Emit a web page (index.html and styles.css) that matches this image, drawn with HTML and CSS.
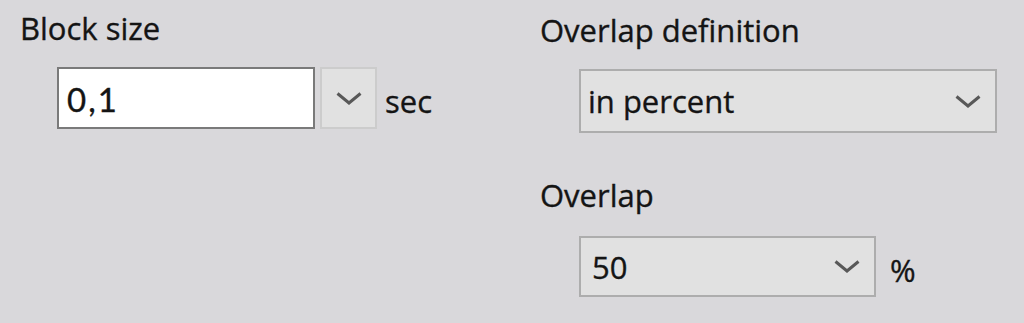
FILE: index.html
```html
<!DOCTYPE html>
<html>
<head>
<meta charset="utf-8">
<link rel="stylesheet" href="styles.css">
</head>
<body>
<div class="dialog">
  <div class="col col-left">
    <div class="label">Block size</div>
    <div class="row">
      <div class="edit"><span class="mono">0,1</span></div>
      <div class="drop-btn">
        <svg class="chev" viewBox="0 0 26 13" width="26" height="13"><polyline points="1.5,1.5 13,11 24.5,1.5" fill="none" stroke="#585858" stroke-width="3"/></svg>
      </div>
      <span class="unit">sec</span>
    </div>
  </div>
  <div class="col col-right">
    <div class="label">Overlap definition</div>
    <div class="row">
      <div class="combo combo-wide">
        <span class="combo-text">in percent</span>
        <svg class="chev" viewBox="0 0 26 13" width="26" height="13"><polyline points="1.5,1.5 13,11 24.5,1.5" fill="none" stroke="#585858" stroke-width="3"/></svg>
      </div>
    </div>
    <div class="label label-overlap">Overlap</div>
    <div class="row">
      <div class="combo combo-mid">
        <span class="combo-text num">50</span>
        <svg class="chev" viewBox="0 0 26 13" width="26" height="13"><polyline points="1.5,1.5 13,11 24.5,1.5" fill="none" stroke="#585858" stroke-width="3"/></svg>
      </div>
      <span class="unit unit-pct">%</span>
    </div>
  </div>
</div>
</body>
</html>
```

FILE: styles.css
```css
html, body {
  margin: 0;
  padding: 0;
  background: #d9d8db;
}
body {
  width: 1024px;
  height: 323px;
  overflow: hidden;
  font-family: "Open Sans", "Noto Sans", sans-serif;
  font-size: 31px;
  color: #141414;
  -webkit-text-stroke: 0.35px #141414;
}
.dialog {
  display: grid;
  grid-template-columns: 520px 1fr;
  padding-left: 20px;
}
.col-left { padding-top: 11px; }
.col-right { padding-top: 13px; }
.label {
  line-height: 34px;
  height: 34px;
  white-space: nowrap;
}
.row {
  display: flex;
  align-items: center;
}
.col-left .row {
  margin-top: 22px;
  margin-left: 37px;
}
.col-right .row {
  margin-top: 22px;
  margin-left: 39px;
}
.edit {
  box-sizing: border-box;
  width: 258px;
  height: 62px;
  background: #fff;
  border: 2px solid #7a7a7a;
  display: flex;
  align-items: center;
  padding-left: 8px;
}
.mono {
  font-family: "Lato", "DejaVu Sans", sans-serif;
  font-size: 33px;
  letter-spacing: 2px;
  line-height: 1;
  position: relative;
  top: 1px;
}
.drop-btn {
  box-sizing: border-box;
  width: 57px;
  height: 62px;
  margin-left: 5px;
  background: #e1e1e1;
  border: 2px solid #cccccc;
  display: flex;
  align-items: center;
  justify-content: center;
}
.unit {
  margin-left: 8px;
  line-height: 34px;
  position: relative;
  top: 3px;
}
.combo {
  box-sizing: border-box;
  background: #e1e1e1;
  border: 2px solid #adadad;
  display: flex;
  align-items: center;
  justify-content: space-between;
  padding-left: 7px;
  padding-right: 14px;
}
.combo-wide {
  width: 418px;
  height: 64px;
}
.combo-mid {
  width: 297px;
  height: 61px;
}
.combo-text {
  line-height: 34px;
}
.num {
  padding-left: 4px;
}
.label-overlap {
  margin-top: 45px;
}
.col-right .label-overlap + .row {
  margin-top: 24px;
}
.unit-pct {
  margin-left: 14px;
}
.chev {
  display: block;
  flex: none;
}
```
